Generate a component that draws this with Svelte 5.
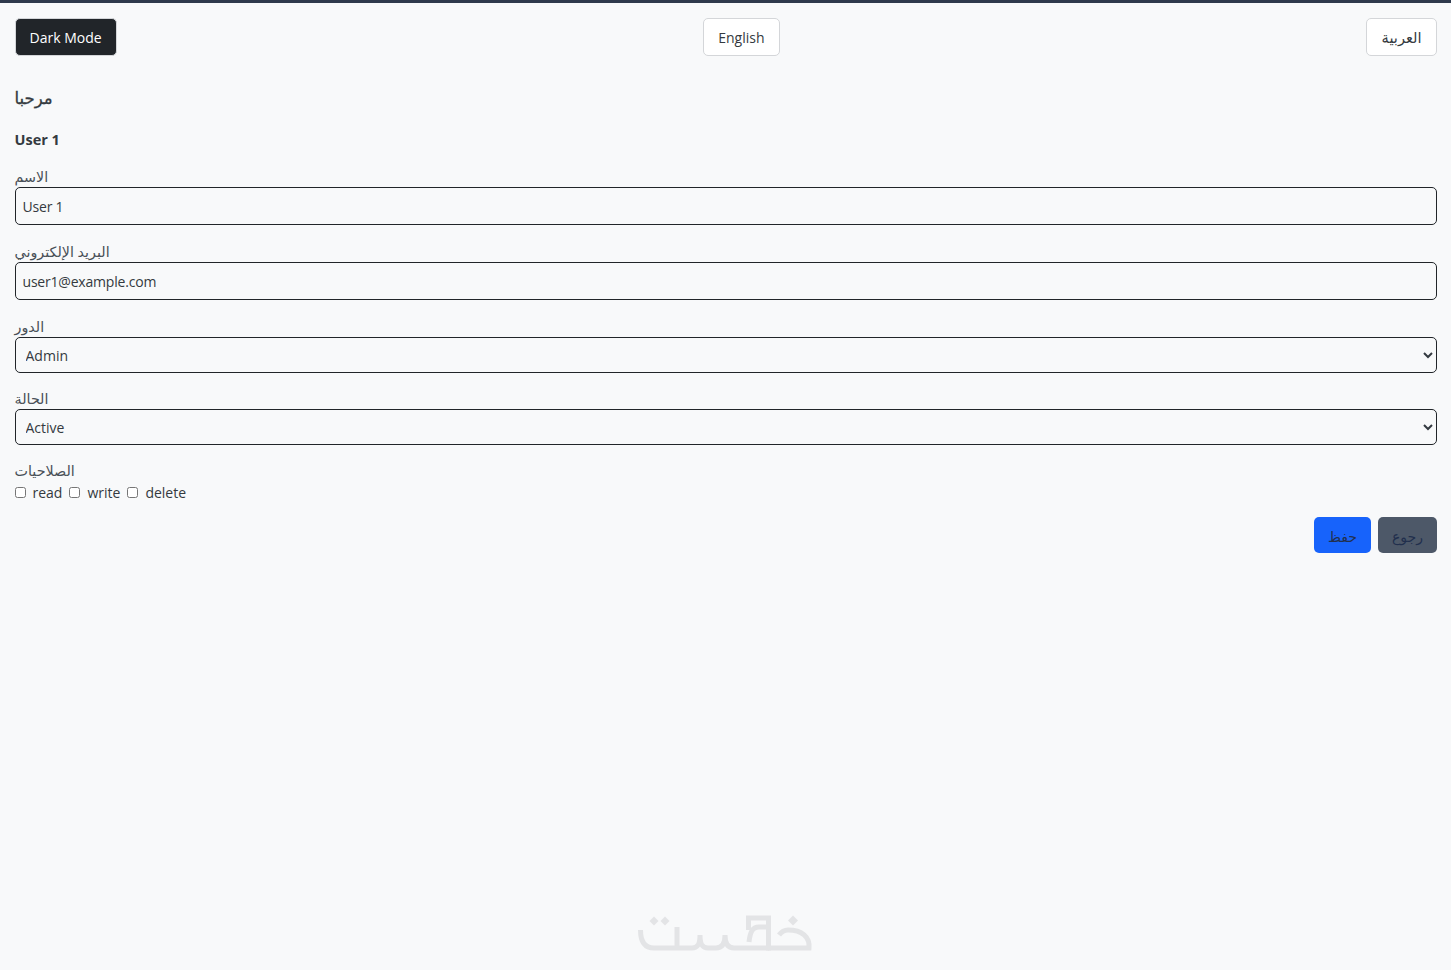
<script>
  const users = { name: "User 1", email: "user1@example.com" };
  const permissions = ["read", "write", "delete"];
</script>

<div class="page">
  <header class="toolbar">
    <button class="btn dark">Dark Mode</button>
    <button class="btn light">English</button>
    <button class="btn light arabic">العربية</button>
  </header>

  <h2 class="welcome">مرحبا</h2>
  <h3 class="user">User 1</h3>

  <form on:submit|preventDefault>
    <div class="group">
      <label for="name">الاسم</label>
      <input id="name" type="text" value={users.name} />
    </div>
    <div class="group">
      <label for="email">البريد الإلكتروني</label>
      <input id="email" type="text" value={users.email} />
    </div>
    <div class="group">
      <label for="role">الدور</label>
      <select id="role"><option>Admin</option><option>User</option></select>
    </div>
    <div class="group">
      <label for="status">الحالة</label>
      <select id="status"><option>Active</option><option>Inactive</option></select>
    </div>
    <div class="group">
      <span class="label">الصلاحيات</span>
      <div class="perms">
        {#each permissions as p}
          <label class="perm"><input type="checkbox" />{p}</label>
        {/each}
      </div>
    </div>
    <div class="actions">
      <button class="btn save">حفظ</button>
      <button class="btn back">رجوع</button>
    </div>
  </form>

  <svg class="mark" viewBox="0 0 176 40" width="176" height="40" fill="none" stroke="#e3e4e6" stroke-width="5">
    <path d="M2.500 17 C2.500 28 6 35 16 35 H39 V14 M39 35 H54 C60 35 62 31 62 22 C62 31 64 35 70 35 H78 C84 35 87 31 87 22 C87 31 90 35 96 35 H131" />
    <path d="M110.500 17 V5 H130.500 V37.500 M130 14 H121 C114 14 112 20 111 29" />
    <path d="M130 35 H171 C172 24 164 17 150 17 C147 17 144 18 141 22" />
    <path d="M16 3.500 l4.500 4.500 l-4.500 4.500 l-4.500 -4.500 z M27 3.500 l4.500 4.500 l-4.500 4.500 l-4.500 -4.500 z M155 2.500 l5 5 l-5 5 l-5 -5 z" fill="#e3e4e6" stroke="none" />
  </svg>
</div>

<style>
  :global(body) {
    margin: 0;
    background: #f8f9fa;
  }

  .page {
    box-sizing: border-box;
    min-height: 970px;
    position: relative;
    border-top: 3px solid #2f3a4c;
    padding: 15px 14px 0 14.5px;
    background: #f8f9fa;
    color: #343a40;
    font-family: "Open Sans", "DejaVu Sans", sans-serif;
    font-size: 14px;
  }

  .toolbar {
    display: flex;
    justify-content: space-between;
  }

  .btn {
    height: 38px;
    padding: 0 14px;
    border-radius: 5px;
    border: 1px solid #d4d6d9;
    font: inherit;
    cursor: pointer;
  }

  .dark {
    background: #212529;
    color: #fff;
  }

  .light {
    background: #fff;
    color: #343a40;
  }

  .arabic {
    padding: 0 14.5px;
    font-size: 14.6px;
  }

  .welcome {
    margin: 31px 0 0;
    font-size: 16.5px;
    line-height: 21px;
    font-weight: 400;
    -webkit-text-stroke: 0.3px #343a40;
    text-align: left;
  }

  .user {
    margin: 21px 0 17px;
    font-size: 14.5px;
    line-height: 21px;
    font-weight: 700;
  }

  .group {
    margin-bottom: 17px;
  }

  .group:nth-child(n + 3) {
    margin-bottom: 16px;
  }

  .group > label,
  .label {
    display: block;
    height: 20px;
    line-height: 20px;
    font-size: 14.3px;
    color: #495057;
  }

  input[type="text"],
  select {
    box-sizing: border-box;
    display: block;
    width: 100%;
    border: 1.5px solid #212529;
    border-radius: 5px;
    background: #f8f9fa;
    color: #343a40;
    font: inherit;
  }

  input[type="text"] {
    height: 38px;
    padding: 0 7px;
    letter-spacing: -0.2px;
  }

  select {
    height: 36px;
    padding: 0 6px;
  }

  .perms {
    display: flex;
    gap: 7px;
    height: 22px;
    align-items: center;
  }

  .perm {
    display: flex;
    align-items: center;
    gap: 7px;
  }

  .perm input {
    margin: 0;
    width: 11px;
    height: 11px;
  }

  .actions {
    display: flex;
    justify-content: flex-end;
    gap: 7px;
    margin-top: -2px;
  }

  .save,
  .back {
    height: 36px;
    color: #212f4d;
    border: none;
    font-size: 14px;
    padding: 2px 14px 0;
  }

  .save {
    background: #1763fb;
  }

  .back {
    background: #4d5868;
  }

  .mark {
    position: absolute;
    left: 638px;
    top: 910px;
  }
</style>
